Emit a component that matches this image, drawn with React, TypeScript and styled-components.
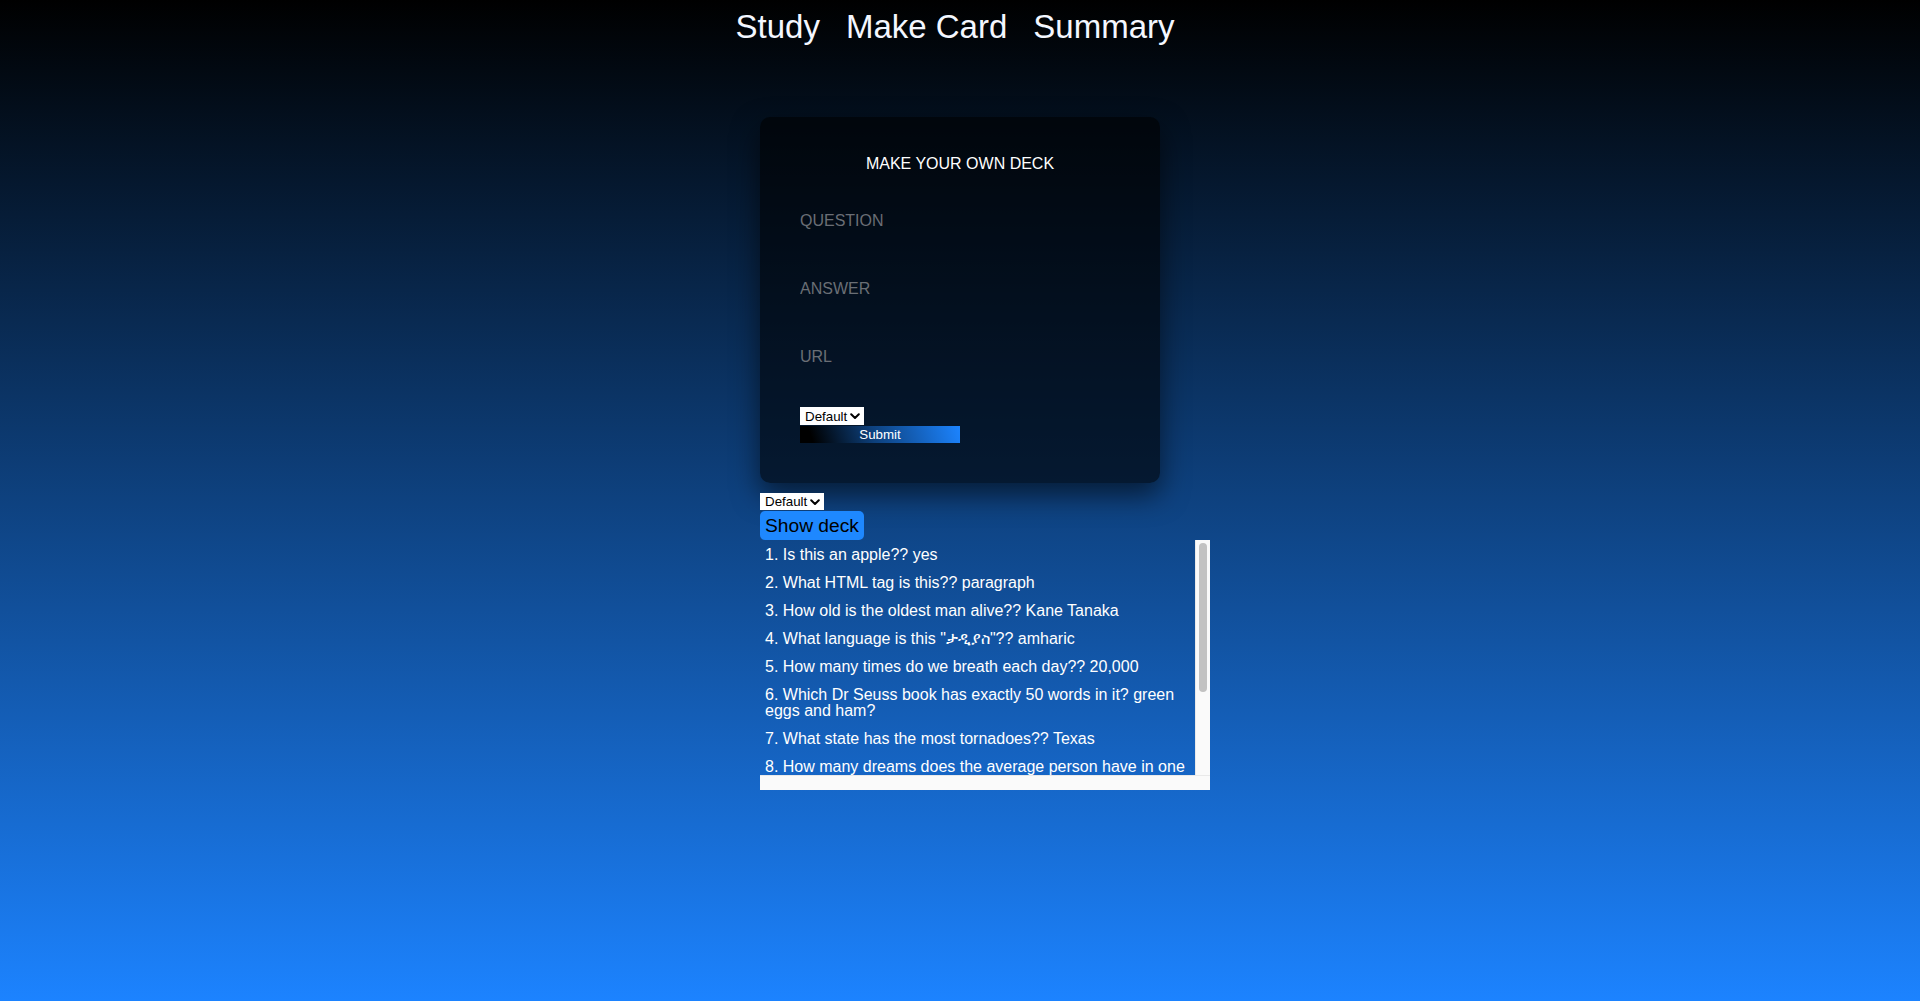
import React from "react";
import styled, { createGlobalStyle } from "styled-components";

const GlobalStyle = createGlobalStyle`
  html, body {
    margin: 0;
    padding: 0;
    min-height: 100%;
  }
  body {
    min-height: 100vh;
    background: linear-gradient(to bottom, #000000 0%, #1c83ff 100%);
    font-family: "Liberation Sans", Arial, Helvetica, "Noto Sans", "DejaVu Sans", sans-serif;
    color: #ffffff;
  }
  * { box-sizing: border-box; }
`;

const Page = styled.div`
  min-height: 100vh;
  display: flex;
  flex-direction: column;
  align-items: center;
`;

const Nav = styled.nav`
  display: flex;
  gap: 26px;
  padding-top: 8px;
  padding-right: 10px;
`;

const NavLink = styled.a`
  font-size: 33px;
  line-height: 38px;
  color: #f4f7ff;
  text-decoration: none;
  cursor: pointer;
`;

const Main = styled.main`
  width: 400px;
  margin-top: 71px;
  display: flex;
  flex-direction: column;
  align-items: flex-start;
`;

const Card = styled.form`
  align-self: stretch;
  padding: 38px 40px 40px;
  border-radius: 10px;
  background: rgba(0, 0, 0, 0.6);
  box-shadow: 0 12px 28px rgba(0, 0, 0, 0.55);
  display: flex;
  flex-direction: column;
  align-items: flex-start;
`;

const Title = styled.h3`
  align-self: stretch;
  margin: 0 0 14px;
  font-size: 16px;
  font-weight: 400;
  line-height: 18px;
  text-align: center;
  color: #ffffff;
`;

const Field = styled.input`
  display: block;
  width: 100%;
  height: 68px;
  padding: 0;
  margin: 0;
  border: none;
  outline: none;
  background: transparent;
  color: #ffffff;
  font-family: inherit;
  font-size: 16px;
  &::placeholder {
    color: #6a6e75;
  }
`;

const SelectWrap = styled.div<{ $top: number; $h: number }>`
  position: relative;
  width: 64px;
  height: ${(p) => p.$h}px;
  margin-top: ${(p) => p.$top}px;
`;

const Select = styled.select`
  appearance: none;
  -webkit-appearance: none;
  display: block;
  width: 100%;
  height: 100%;
  margin: 0;
  padding: 0 0 0 5px;
  border: none;
  border-radius: 0;
  background: #ffffff;
  color: #000000;
  font-family: inherit;
  font-size: 13.33px;
  line-height: 17px;
  outline: none;
`;

const Chevron = styled.svg`
  position: absolute;
  right: 4px;
  top: 6px;
  pointer-events: none;
`;

const SubmitButton = styled.button`
  width: 160px;
  height: 17px;
  margin-top: 1px;
  padding: 0;
  border: none;
  background: linear-gradient(72deg, #000000 8%, #0d3f7a 45%, #1c84ff 100%);
  color: #ffffff;
  font-family: inherit;
  font-size: 13.33px;
  line-height: 17px;
  cursor: pointer;
`;

const ShowDeckButton = styled.button`
  margin-top: 1px;
  height: 29px;
  padding: 0 5px;
  border: none;
  border-radius: 5px;
  background: #1e88ff;
  color: #000000;
  font-family: inherit;
  font-size: 19.2px;
  line-height: 29px;
  cursor: pointer;
`;

const DeckFrame = styled.div`
  width: 450px;
  height: 250px;
  flex-shrink: 0;
  display: grid;
  grid-template-columns: 435px 15px;
  grid-template-rows: 235px 15px;
`;

const DeckList = styled.ul`
  margin: 0;
  padding: 0;
  list-style: none;
  overflow-y: auto;
  overflow-x: hidden;
  scrollbar-width: none;
  &::-webkit-scrollbar {
    display: none;
  }
`;

const DeckItem = styled.li`
  padding: 7px 5px 5px;
  font-size: 16px;
  line-height: 16px;
  color: #ffffff;
`;

const VTrack = styled.div`
  background: #fafafa;
  border-left: 1px solid #e9e9e9;
  padding: 3px 3px 0 3px;
`;

const Thumb = styled.div`
  width: 8px;
  height: 149px;
  border-radius: 4px;
  background: #c2c2c2;
`;

const HTrack = styled.div`
  grid-column: 1 / span 2;
  background: #fafafa;
  border-top: 1px solid #e9e9e9;
`;

const cards: string[] = [
  "Is this an apple?? yes",
  "What HTML tag is this?? paragraph",
  "How old is the oldest man alive?? Kane Tanaka",
  'What language is this "ታዲያስ"?? amharic',
  "How many times do we breath each day?? 20,000",
  "Which Dr Seuss book has exactly 50 words in it? green eggs and ham?",
  "What state has the most tornadoes?? Texas",
  "How many dreams does the average person have in one night?? 4-6",
  "What is the fastest land animal?? cheetah",
  "How many hearts does an octopus have?? 3",
  "What is the capital of Ethiopia?? Addis Ababa",
];

function DeckSelect({ top, h }: { top: number; h: number }) {
  return (
    <SelectWrap $top={top} $h={h}>
      <Select defaultValue="Default">
        <option>Default</option>
      </Select>
      <Chevron width="10" height="7" viewBox="0 0 10 7">
        <path d="M1.2 1.2 L5 5 L8.8 1.2" fill="none" stroke="#000" strokeWidth="2" strokeLinecap="round" strokeLinejoin="round" />
      </Chevron>
    </SelectWrap>
  );
}

export default function App() {
  return (
    <>
      <GlobalStyle />
      <Page>
        <Nav>
          <NavLink>Study</NavLink>
          <NavLink>Make Card</NavLink>
          <NavLink>Summary</NavLink>
        </Nav>
        <Main>
          <Card onSubmit={(e) => e.preventDefault()}>
            <Title>MAKE YOUR OWN DECK</Title>
            <Field placeholder="QUESTION" />
            <Field placeholder="ANSWER" />
            <Field placeholder="URL" />
            <DeckSelect top={16} h={18} />
            <SubmitButton type="submit">Submit</SubmitButton>
          </Card>
          <DeckSelect top={10} h={17} />
          <ShowDeckButton type="button">Show deck</ShowDeckButton>
          <DeckFrame>
            <DeckList>
              {cards.map((c, i) => (
                <DeckItem key={i}>{`${i + 1}. ${c}`}</DeckItem>
              ))}
            </DeckList>
            <VTrack>
              <Thumb />
            </VTrack>
            <HTrack />
          </DeckFrame>
        </Main>
      </Page>
    </>
  );
}
